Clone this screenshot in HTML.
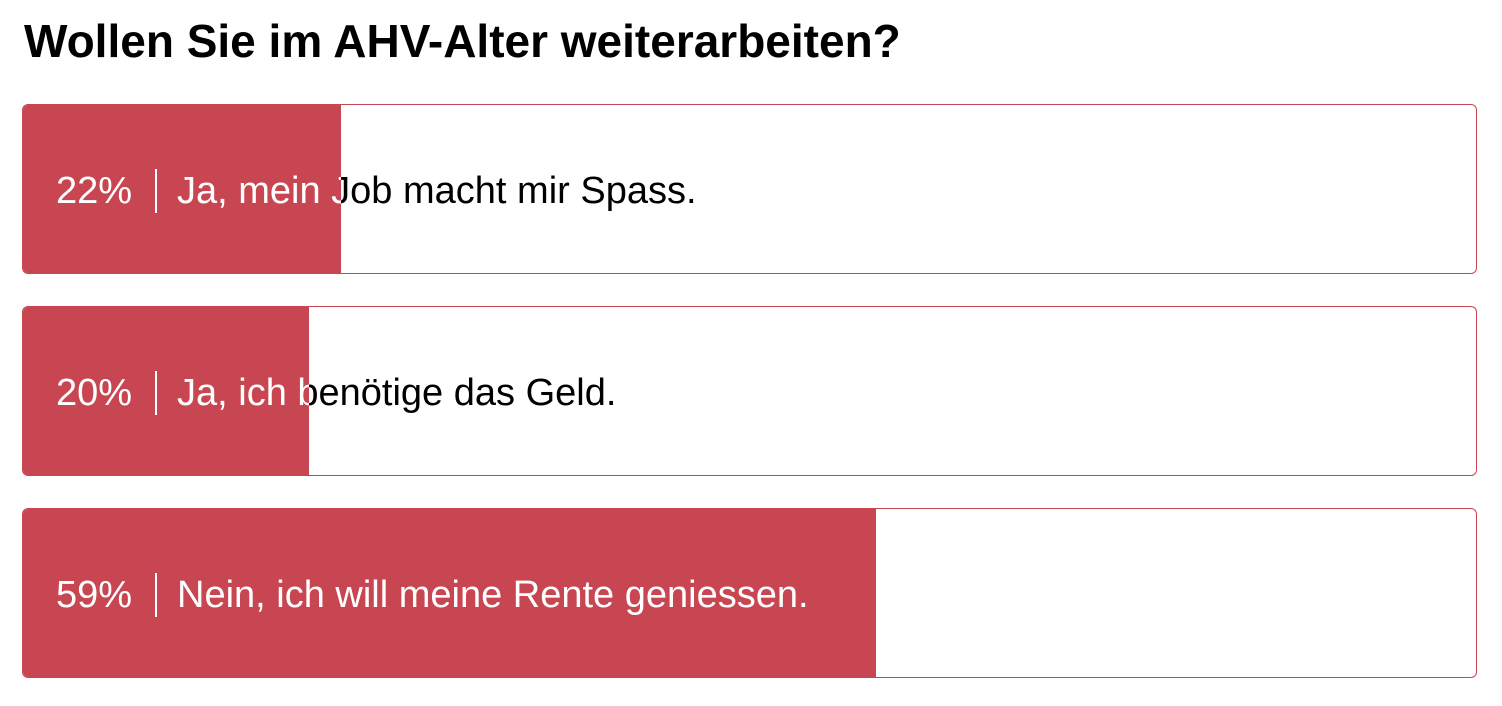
<!DOCTYPE html>
<html><head><meta charset="utf-8"><style>
body{margin:0;background:#fff;font-family:"Liberation Sans",sans-serif;}
h1{position:absolute;left:24px;top:15px;margin:0;font-size:46px;line-height:52px;font-weight:bold;color:#000;letter-spacing:0}
.box{position:absolute;left:22px;width:1453px;height:168px;border:1px solid #c84651;border-radius:6px;overflow:hidden;background:#fff}
.bar{position:absolute;left:0;top:0;bottom:0;background:#c84651;overflow:hidden}
.t{position:absolute;left:0;top:0;width:1453px;height:168px;font-size:38px;line-height:44px;color:#000}
.bar .t{color:#fff}
.p{position:absolute;left:33px;top:64px;}
.d{position:absolute;left:132px;top:64px;width:2px;height:44px;background:currentColor}
.l{position:absolute;left:154px;top:64px;white-space:nowrap}
</style></head><body>
<h1>Wollen Sie im AHV-Alter weiterarbeiten?</h1>
<div class="box" style="top:104px"><div class="t"><span class="p">22%</span><span class="d"></span><span class="l">Ja, mein Job macht mir Spass.</span></div><div class="bar" style="width:318px"><div class="t"><span class="p">22%</span><span class="d"></span><span class="l">Ja, mein Job macht mir Spass.</span></div></div></div>
<div class="box" style="top:306px"><div class="t"><span class="p">20%</span><span class="d"></span><span class="l">Ja, ich benötige das Geld.</span></div><div class="bar" style="width:286px"><div class="t"><span class="p">20%</span><span class="d"></span><span class="l">Ja, ich benötige das Geld.</span></div></div></div>
<div class="box" style="top:508px"><div class="t"><span class="p">59%</span><span class="d"></span><span class="l">Nein, ich will meine Rente geniessen.</span></div><div class="bar" style="width:853px"><div class="t"><span class="p">59%</span><span class="d"></span><span class="l">Nein, ich will meine Rente geniessen.</span></div></div></div>
</body></html>
